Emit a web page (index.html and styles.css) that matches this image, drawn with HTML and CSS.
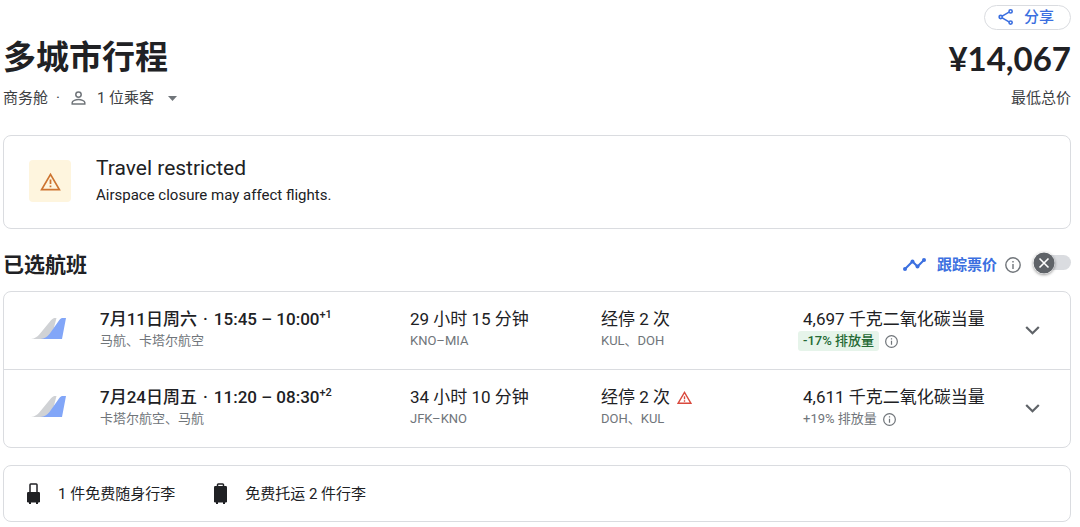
FILE: index.html
```html
<!DOCTYPE html>
<html lang="zh-CN">
<head>
    <meta charset="UTF-8">
    <meta name="viewport" content="width=device-width, initial-scale=1.0">
    <title>多城市行程</title>
    <link rel="stylesheet" href="styles.css">
</head>
<body>
    <div class="toolbar">
        <button class="share">
            <svg width="16" height="16" viewBox="0 0 16 16" fill="none" stroke="currentColor" stroke-width="1.6">
                <path d="M4.2 7.1l6.8-4M4.2 8.9l6.8 4"/>
                <circle cx="2.7" cy="8" r="1.6"/><circle cx="12.6" cy="2.4" r="1.6"/><circle cx="12.6" cy="13.6" r="1.6"/>
            </svg>
            <span>分享</span>
        </button>
    </div>

    <header class="header">
        <h1>多城市行程</h1>
        <div class="price">¥14,067</div>
    </header>
    <div class="subheader">
        <div class="trip-info">
            <span>商务舱</span>
            <span class="dot">·</span>
            <button class="passengers">
                <svg width="15" height="14" viewBox="0 0 15 14" fill="none" stroke="#70757a" stroke-width="1.5">
                    <circle cx="7.5" cy="3.6" r="2.7"/>
                    <path d="M1.2 13v-1.6c0-1.7 3.8-2.8 6.3-2.8s6.3 1.1 6.3 2.8V13z"/>
                </svg>
                <span>1 位乘客</span>
                <svg class="caret" width="9" height="5" viewBox="0 0 9 5"><path fill="#70757a" d="M0 0h9L4.5 5z"/></svg>
            </button>
        </div>
        <div>最低总价</div>
    </div>

    <section class="card notice">
        <div class="notice-icon">
            <svg width="21" height="19" viewBox="0 0 22 19" fill="none" stroke="#cd7430" stroke-width="1.8">
                <path d="M11 2L20.3 17.9H1.7z"/>
                <path d="M11 7.5v4.5M11 13.6v2"/>
            </svg>
        </div>
        <div>
            <h2 class="notice-title">Travel restricted</h2>
            <p class="notice-text">Airspace closure may affect flights.</p>
        </div>
    </section>

    <div class="section-head">
        <h2>已选航班</h2>
        <div class="track">
            <svg width="23" height="13" viewBox="0 0 23 13" fill="#3b6fe0">
                <path d="M2 11l7.5-7.5 5 5L21 2" fill="none" stroke="#3b6fe0" stroke-width="2"/>
                <circle cx="2" cy="11" r="2"/><circle cx="9.5" cy="3.5" r="2"/><circle cx="14.5" cy="8.5" r="2"/><circle cx="21" cy="2" r="2"/>
            </svg>
            <label for="track-price">跟踪票价</label>
            <svg width="16" height="16" viewBox="0 0 16 16" fill="none" stroke="#70757a" stroke-width="1.4">
                <circle cx="8" cy="8" r="7.2"/><path d="M8 7v5M8 4v1.6"/>
            </svg>
            <span class="switch">
                <input type="checkbox" role="switch" id="track-price">
                <svg class="knob" width="22" height="22" viewBox="0 0 22 22">
                    <circle cx="11" cy="11" r="10.5" fill="#5f6368"/>
                    <path d="M6.5 6.5l9 9M15.5 6.5l-9 9" stroke="#fff" stroke-width="1.6"/>
                </svg>
            </span>
        </div>
    </div>

    <section class="card">
        <div class="flight">
            <svg class="logo" width="35" height="21" viewBox="0 0 35 21">
                <path fill="#d0d2d5" d="M0 21c4-.2 6.500-2.500 8.500-4.700L20 2.300C21.500.6 22.800 0 24.500 0h1L20 21z"/>
                <path fill="#82a6f8" d="M9.500 21c4-.2 6.500-2 9-5L28 2.500C29.400.6 30.500 0 32 0h3l-4 21z"/>
            </svg>
            <div>
                <div class="main times">7月11日周六<span class="sep">·</span>15:45 – 10:00<sup>+1</sup></div>
                <div class="sub">马航、卡塔尔航空</div>
            </div>
            <div>
                <div class="main">29 小时 15 分钟</div>
                <div class="sub">KNO–MIA</div>
            </div>
            <div>
                <div class="main">经停 2 次</div>
                <div class="sub">KUL、DOH</div>
            </div>
            <div>
                <div class="main">4,697 千克二氧化碳当量</div>
                <div class="sub">
                    <span class="badge">-17% 排放量</span>
                    <svg width="13" height="13" viewBox="0 0 16 16" fill="none" stroke="#70757a" stroke-width="1.5">
                        <circle cx="8" cy="8" r="7.2"/><path d="M8 7v5M8 4v1.6"/>
                    </svg>
                </div>
            </div>
            <button class="expand" aria-label="展开">
                <svg width="15" height="9" viewBox="0 0 15 9"><path d="M1.2 1l6.3 6.3L13.8 1" fill="none" stroke="#5f6368" stroke-width="2.2"/></svg>
            </button>
        </div>
        <div class="flight">
            <svg class="logo" width="35" height="21" viewBox="0 0 35 21">
                <path fill="#d0d2d5" d="M0 21c4-.2 6.500-2.500 8.500-4.700L20 2.300C21.500.6 22.800 0 24.500 0h1L20 21z"/>
                <path fill="#82a6f8" d="M9.500 21c4-.2 6.500-2 9-5L28 2.500C29.400.6 30.500 0 32 0h3l-4 21z"/>
            </svg>
            <div>
                <div class="main times">7月24日周五<span class="sep">·</span>11:20 – 08:30<sup>+2</sup></div>
                <div class="sub">卡塔尔航空、马航</div>
            </div>
            <div>
                <div class="main">34 小时 10 分钟</div>
                <div class="sub">JFK–KNO</div>
            </div>
            <div>
                <div class="main">
                    <span>经停 2 次</span>
                    <svg class="warn" width="15" height="13" viewBox="0 0 22 19" fill="none" stroke="#d9493d" stroke-width="2">
                        <path d="M11 2L20.3 17.9H1.7z"/>
                        <path d="M11 7.5v4.5M11 13.6v2"/>
                    </svg>
                </div>
                <div class="sub">DOH、KUL</div>
            </div>
            <div>
                <div class="main">4,611 千克二氧化碳当量</div>
                <div class="sub">
                    <span>+19% 排放量</span>
                    <svg width="13" height="13" viewBox="0 0 16 16" fill="none" stroke="#70757a" stroke-width="1.5">
                        <circle cx="8" cy="8" r="7.2"/><path d="M8 7v5M8 4v1.6"/>
                    </svg>
                </div>
            </div>
            <button class="expand" aria-label="展开">
                <svg width="15" height="9" viewBox="0 0 15 9"><path d="M1.2 1l6.3 6.3L13.8 1" fill="none" stroke="#5f6368" stroke-width="2.2"/></svg>
            </button>
        </div>
    </section>

    <section class="card baggage">
        <div class="bag">
            <svg width="13" height="21" viewBox="0 0 13 21" fill="#202124">
                <path d="M3 10V1.8Q3 1 3.8 1h5.4Q10 1 10 1.8V10" fill="none" stroke="#202124" stroke-width="1.5"/>
                <rect y="9" width="13" height="10.5" rx="1.2"/>
                <path d="M2 19h2v2H2zM9 19h2v2H9z"/>
            </svg>
            <span>1 件免费随身行李</span>
        </div>
        <div class="bag">
            <svg width="13" height="21" viewBox="0 0 13 21" fill="#202124">
                <path d="M3.5 4V1.8Q3.5 1 4.3 1h4.4Q9.5 1 9.5 1.8V4" fill="none" stroke="#202124" stroke-width="1.5"/>
                <rect y="3" width="13" height="16.5" rx="1.2"/>
                <path d="M2 19h2v2H2zM9 19h2v2H9z"/>
            </svg>
            <span>免费托运 2 件行李</span>
        </div>
    </section>
</body>
</html>
```
FILE: styles.css
```css
* { margin: 0; padding: 0; box-sizing: border-box; }
body {
    padding: 5px 9px 5px 3px;
    background-color: #fff;
    color: #202124;
    font-family: Roboto, "Noto Sans CJK SC", sans-serif;
    font-size: 15px;
    line-height: 20px;
}
button {
    border: none;
    background: none;
    color: inherit;
    font: inherit;
    cursor: pointer;
}
svg {
    display: block;
    flex-shrink: 0;
}
.toolbar {
    display: flex;
    justify-content: flex-end;
}
.share {
    display: flex;
    align-items: center;
    gap: 10px;
    height: 25px;
    padding: 0 16px 2px 13px;
    border: 1px solid #dadce0;
    border-radius: 13px;
    color: #3b6fe0;
    font-weight: 500;
}
.header {
    display: flex;
    justify-content: space-between;
    align-items: center;
    height: 56px;
}
.header h1 {
    font-size: 33px;
    line-height: 44px;
    font-weight: 700;
}
.price {
    font-family: Lato, sans-serif;
    font-size: 33px;
    line-height: 44px;
    font-weight: 700;
}
.subheader {
    display: flex;
    justify-content: space-between;
    height: 49px;
    padding-top: 2px;
    color: #3c4043;
}
.trip-info {
    display: flex;
}
.dot {
    padding: 0 11px 0 8px;
}
.passengers {
    display: flex;
    align-items: center;
    gap: 11px;
    height: 20px;
}
.caret {
    margin-left: 3px;
}
.card {
    border: 1px solid #dadce0;
    border-radius: 8px;
}
.notice {
    display: flex;
    gap: 25px;
    padding: 19px 25px;
}
.notice-icon {
    display: flex;
    align-items: center;
    justify-content: center;
    width: 42px;
    height: 42px;
    margin-top: 5px;
    border-radius: 4px;
    background-color: #fef5de;
}
.notice-title {
    font-size: 21px;
    line-height: 26px;
    font-weight: 400;
}
.notice-text {
    line-height: 28px;
}
.section-head {
    display: flex;
    justify-content: space-between;
    align-items: center;
    height: 62px;
    padding-top: 9px;
}
.section-head h2 {
    font-size: 21px;
    line-height: 30px;
    font-weight: 700;
}
.track {
    display: flex;
    align-items: center;
    gap: 8px;
}
.track label {
    padding-left: 3px;
    color: #3b6fe0;
    font-weight: 700;
}
.switch {
    position: relative;
    display: flex;
    align-items: center;
    height: 22px;
    margin: 0 0 4px 4px;
}
.switch input {
    appearance: none;
    width: 34px;
    height: 15px;
    margin-left: 4px;
    border-radius: 8px;
    background-color: #dadce0;
}
.knob {
    position: absolute;
    left: 0;
    top: 0;
    border-radius: 50%;
    box-shadow: 0 1px 3px rgba(0, 0, 0, 0.4);
    pointer-events: none;
}
.flight {
    display: grid;
    grid-template-columns: 69px 310fr 191fr 202fr 222fr 45px;
    padding: 16px 0 17px 27px;
}
.flight + .flight {
    border-top: 1px solid #dadce0;
}
.logo {
    margin-top: 10px;
}
.main {
    display: flex;
    align-items: center;
    height: 22px;
    font-size: 17px;
    line-height: 22px;
    white-space: nowrap;
}
.times {
    font-weight: 500;
}
.times sup {
    align-self: flex-start;
    font-size: 11px;
    line-height: 14px;
}
.sep {
    padding: 0 6px;
}
.warn {
    margin-left: 7px;
}
.sub {
    display: flex;
    align-items: center;
    gap: 6px;
    height: 22px;
    color: #70757a;
    font-size: 13px;
}
.badge {
    margin-left: -5px;
    padding: 0 5px;
    border-radius: 3px;
    background-color: #e6f4ea;
    color: #256a35;
    font-weight: 500;
}
.expand {
    align-self: center;
    justify-self: start;
}
.baggage {
    display: flex;
    gap: 39px;
    margin-top: 17px;
    padding: 17px 23px;
}
.bag {
    display: flex;
    align-items: center;
    gap: 18px;
}
```
